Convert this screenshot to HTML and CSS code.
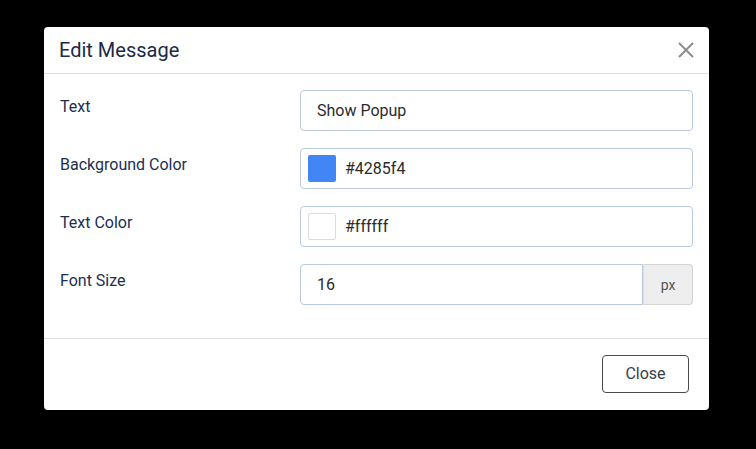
FILE: index.html
```html
<!DOCTYPE html>
<html lang="en">
<head>
  <meta charset="UTF-8">
  <title>Edit Message</title>
  <link rel="stylesheet" href="styles.css">
</head>
<body>
  <div class="modal">
    <div class="modal-header">
      <h3>Edit Message</h3>
      <button class="close-x" aria-label="Close">
        <svg width="18" height="18" viewBox="0 0 18 18">
          <path d="M2 2 L16 16 M16 2 L2 16" stroke="#8a8a8a" stroke-width="1.8" fill="none"/>
        </svg>
      </button>
    </div>

    <div class="modal-body">
      <div class="row">
        <label>Text</label>
        <div class="field">Show Popup</div>
      </div>
      <div class="row">
        <label>Background Color</label>
        <div class="field color-field">
          <span class="swatch swatch-blue"></span>
          #4285f4
        </div>
      </div>
      <div class="row">
        <label>Text Color</label>
        <div class="field color-field">
          <span class="swatch swatch-white"></span>
          #ffffff
        </div>
      </div>
      <div class="row">
        <label>Font Size</label>
        <div class="input-group">
          <div class="field">16</div>
          <span class="addon">px</span>
        </div>
      </div>
    </div>

    <div class="modal-footer">
      <button class="btn">Close</button>
    </div>
  </div>
</body>
</html>
```

FILE: styles.css
```css
body {
  margin: 0;
  background: #000;
  font-family: Roboto, "Noto Sans", sans-serif;
  padding: 27px 47px 39px 44px;
}
.modal {
  width: 665px;
  height: 383px;
  box-sizing: border-box;
  background: #fff;
  border-radius: 4px;
  display: flex;
  flex-direction: column;
}
.modal-header {
  height: 47px;
  box-sizing: border-box;
  border-bottom: 1px solid #dcdfe6;
  display: flex;
  align-items: center;
  justify-content: space-between;
  padding: 0 14px 0 15px;
}
.modal-header h3 {
  margin: 0;
  font-size: 20px;
  font-weight: 400;
  color: #1b2a45;
}
.close-x {
  background: none;
  border: none;
  padding: 0;
  width: 18px;
  height: 18px;
  cursor: pointer;
  display: block;
}
.close-x svg {
  display: block;
}
.modal-body {
  padding: 16px;
  border-bottom: 1px solid #dcdfe6;
}
.row {
  display: flex;
  margin-bottom: 17px;
}
.row label {
  width: 240px;
  flex: none;
  font-size: 16px;
  color: #1b2f52;
  padding-top: 7px;
}
.field {
  flex: 1;
  height: 41px;
  box-sizing: border-box;
  border: 1px solid #b9c9e2;
  border-radius: 4px;
  padding: 0 16px;
  display: flex;
  align-items: center;
  font-size: 16px;
  color: #2b2b2b;
}
.color-field {
  padding-left: 7px;
  gap: 9px;
}
.swatch {
  width: 28px;
  height: 27px;
  box-sizing: border-box;
  border-radius: 2px;
}
.swatch-blue {
  background: #4285f4;
}
.swatch-white {
  background: #fff;
  border: 1px solid #dcdcdc;
}
.input-group {
  flex: 1;
  display: flex;
}
.input-group .field {
  border-radius: 4px 0 0 4px;
}
.addon {
  width: 50px;
  height: 41px;
  box-sizing: border-box;
  background: #eeeeee;
  border: 1px solid #d4d4d4;
  border-left: 1px solid #dcdcdc;
  border-radius: 0 4px 4px 0;
  display: flex;
  align-items: center;
  justify-content: center;
  font-size: 14px;
  color: #555;
}
.modal-footer {
  flex: 1;
  display: flex;
  justify-content: flex-end;
  align-items: center;
  padding: 0 20px 2px;
}
.btn {
  width: 87px;
  height: 38px;
  background: #fff;
  border: 1px solid #4a4a4a;
  border-radius: 4px;
  font-family: Roboto, "Noto Sans", sans-serif;
  font-size: 16px;
  color: #3a3f4a;
  cursor: pointer;
}
```
